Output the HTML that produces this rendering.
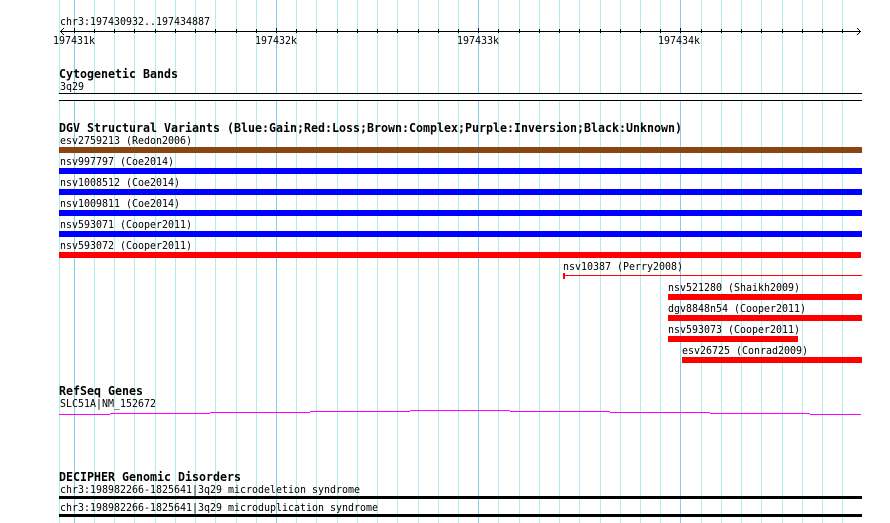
<!DOCTYPE html>
<html>
<head>
<meta charset="utf-8">
<style>
html,body{margin:0;padding:0;background:#fff;width:890px;height:523px;overflow:hidden}
svg{display:block;position:absolute;left:0;top:0}
text{font-family:"DejaVu Sans Mono","Liberation Mono",monospace;font-size:11px;fill:#000;white-space:pre}
text.b{font-weight:bold;font-size:12px}
</style>
</head>
<body>
<svg width="890" height="523" viewBox="0 0 890 523">
<g shape-rendering="crispEdges">
<g fill="#afeeee">
<rect x="59" y="0" width="1" height="523"/><rect x="94" y="0" width="1" height="523"/><rect x="114" y="0" width="1" height="523"/><rect x="134" y="0" width="1" height="523"/><rect x="155" y="0" width="1" height="523"/><rect x="175" y="0" width="1" height="523"/><rect x="195" y="0" width="1" height="523"/><rect x="215" y="0" width="1" height="523"/><rect x="236" y="0" width="1" height="523"/><rect x="256" y="0" width="1" height="523"/><rect x="296" y="0" width="1" height="523"/><rect x="316" y="0" width="1" height="523"/><rect x="337" y="0" width="1" height="523"/><rect x="357" y="0" width="1" height="523"/><rect x="377" y="0" width="1" height="523"/><rect x="397" y="0" width="1" height="523"/><rect x="418" y="0" width="1" height="523"/><rect x="438" y="0" width="1" height="523"/><rect x="458" y="0" width="1" height="523"/><rect x="498" y="0" width="1" height="523"/><rect x="519" y="0" width="1" height="523"/><rect x="539" y="0" width="1" height="523"/><rect x="559" y="0" width="1" height="523"/><rect x="579" y="0" width="1" height="523"/><rect x="600" y="0" width="1" height="523"/><rect x="620" y="0" width="1" height="523"/><rect x="640" y="0" width="1" height="523"/><rect x="660" y="0" width="1" height="523"/><rect x="701" y="0" width="1" height="523"/><rect x="721" y="0" width="1" height="523"/><rect x="741" y="0" width="1" height="523"/><rect x="761" y="0" width="1" height="523"/><rect x="782" y="0" width="1" height="523"/><rect x="802" y="0" width="1" height="523"/><rect x="822" y="0" width="1" height="523"/><rect x="842" y="0" width="1" height="523"/>
</g>
<g fill="#87ceeb">
<rect x="74" y="0" width="1" height="523"/><rect x="276" y="0" width="1" height="523"/><rect x="478" y="0" width="1" height="523"/><rect x="680" y="0" width="1" height="523"/>
</g>
<!-- axis -->
<rect x="60" y="31" width="801" height="1" fill="#000"/>
<g fill="#000">
<rect x="74" y="28" width="1" height="5"/><rect x="276" y="28" width="1" height="5"/><rect x="478" y="28" width="1" height="5"/><rect x="680" y="28" width="1" height="5"/>
<rect x="94" y="29" width="1" height="4"/><rect x="114" y="29" width="1" height="4"/><rect x="134" y="29" width="1" height="4"/><rect x="155" y="29" width="1" height="4"/><rect x="175" y="29" width="1" height="4"/><rect x="195" y="29" width="1" height="4"/><rect x="215" y="29" width="1" height="4"/><rect x="236" y="29" width="1" height="4"/><rect x="256" y="29" width="1" height="4"/><rect x="296" y="29" width="1" height="4"/><rect x="316" y="29" width="1" height="4"/><rect x="337" y="29" width="1" height="4"/><rect x="357" y="29" width="1" height="4"/><rect x="377" y="29" width="1" height="4"/><rect x="397" y="29" width="1" height="4"/><rect x="418" y="29" width="1" height="4"/><rect x="438" y="29" width="1" height="4"/><rect x="458" y="29" width="1" height="4"/><rect x="498" y="29" width="1" height="4"/><rect x="519" y="29" width="1" height="4"/><rect x="539" y="29" width="1" height="4"/><rect x="559" y="29" width="1" height="4"/><rect x="579" y="29" width="1" height="4"/><rect x="600" y="29" width="1" height="4"/><rect x="620" y="29" width="1" height="4"/><rect x="640" y="29" width="1" height="4"/><rect x="660" y="29" width="1" height="4"/><rect x="701" y="29" width="1" height="4"/><rect x="721" y="29" width="1" height="4"/><rect x="741" y="29" width="1" height="4"/><rect x="761" y="29" width="1" height="4"/><rect x="782" y="29" width="1" height="4"/><rect x="802" y="29" width="1" height="4"/><rect x="822" y="29" width="1" height="4"/><rect x="842" y="29" width="1" height="4"/>
<!-- arrowheads -->
<rect x="61" y="30" width="1" height="3"/><rect x="62" y="29" width="1" height="1"/><rect x="62" y="33" width="1" height="1"/><rect x="63" y="28" width="1" height="1"/><rect x="63" y="34" width="1" height="1"/>
<rect x="859" y="30" width="1" height="3"/><rect x="858" y="29" width="1" height="1"/><rect x="858" y="33" width="1" height="1"/><rect x="857" y="28" width="1" height="1"/><rect x="857" y="34" width="1" height="1"/>
</g>
<!-- cytoband -->
<rect x="59" y="93" width="803" height="8" fill="#fff"/>
<rect x="59" y="93" width="803" height="1" fill="#000"/>
<rect x="59" y="100" width="803" height="1" fill="#000"/>
<!-- DGV bars -->
<rect x="59" y="147" width="803" height="6" fill="#8b4513"/>
<rect x="59" y="168" width="803" height="6" fill="#0000ff"/>
<rect x="59" y="189" width="803" height="6" fill="#0000ff"/>
<rect x="59" y="210" width="803" height="6" fill="#0000ff"/>
<rect x="59" y="231" width="803" height="6" fill="#0000ff"/>
<rect x="59" y="252" width="802" height="6" fill="#ff0000"/>
<rect x="563" y="273" width="2" height="6" fill="#ff0000"/>
<rect x="565" y="275" width="297" height="1" fill="#ff0000"/>
<rect x="668" y="294" width="194" height="6" fill="#ff0000"/>
<rect x="668" y="315" width="194" height="6" fill="#ff0000"/>
<rect x="668" y="336" width="130" height="6" fill="#ff0000"/>
<rect x="682" y="357" width="180" height="6" fill="#ff0000"/>
<!-- RefSeq -->
<g fill="#ff00ff">
<rect x="59" y="414" width="51" height="1"/><rect x="110" y="413" width="100" height="1"/><rect x="210" y="412" width="100" height="1"/><rect x="310" y="411" width="100" height="1"/><rect x="410" y="410" width="100" height="1"/><rect x="510" y="411" width="100" height="1"/><rect x="610" y="412" width="100" height="1"/><rect x="710" y="413" width="100" height="1"/><rect x="810" y="414" width="51" height="1"/>
</g>
<!-- Decipher -->
<rect x="59" y="496" width="803" height="3" fill="#000"/>
<rect x="59" y="514" width="803" height="3" fill="#000"/>
</g>

<text x="60" y="25" textLength="150" lengthAdjust="spacingAndGlyphs">chr3:197430932..197434887</text>
<text x="53" y="44" textLength="42" lengthAdjust="spacingAndGlyphs">197431k</text>
<text x="255" y="44" textLength="42" lengthAdjust="spacingAndGlyphs">197432k</text>
<text x="457" y="44" textLength="42" lengthAdjust="spacingAndGlyphs">197433k</text>
<text x="658" y="44" textLength="42" lengthAdjust="spacingAndGlyphs">197434k</text>

<text class="b" x="59" y="78" textLength="119" lengthAdjust="spacingAndGlyphs">Cytogenetic Bands</text>
<text x="60" y="90" textLength="24" lengthAdjust="spacingAndGlyphs">3q29</text>

<text class="b" x="59" y="132" textLength="623" lengthAdjust="spacingAndGlyphs">DGV Structural Variants (Blue:Gain;Red:Loss;Brown:Complex;Purple:Inversion;Black:Unknown)</text>
<text x="60" y="144" textLength="132" lengthAdjust="spacingAndGlyphs">esv2759213 (Redon2006)</text>
<text x="60" y="165" textLength="114" lengthAdjust="spacingAndGlyphs">nsv997797 (Coe2014)</text>
<text x="60" y="186" textLength="120" lengthAdjust="spacingAndGlyphs">nsv1008512 (Coe2014)</text>
<text x="60" y="207" textLength="120" lengthAdjust="spacingAndGlyphs">nsv1009811 (Coe2014)</text>
<text x="60" y="228" textLength="132" lengthAdjust="spacingAndGlyphs">nsv593071 (Cooper2011)</text>
<text x="60" y="249" textLength="132" lengthAdjust="spacingAndGlyphs">nsv593072 (Cooper2011)</text>
<text x="563" y="270" textLength="120" lengthAdjust="spacingAndGlyphs">nsv10387 (Perry2008)</text>
<text x="668" y="291" textLength="132" lengthAdjust="spacingAndGlyphs">nsv521280 (Shaikh2009)</text>
<text x="668" y="312" textLength="138" lengthAdjust="spacingAndGlyphs">dgv8848n54 (Cooper2011)</text>
<text x="668" y="333" textLength="132" lengthAdjust="spacingAndGlyphs">nsv593073 (Cooper2011)</text>
<text x="682" y="354" textLength="126" lengthAdjust="spacingAndGlyphs">esv26725 (Conrad2009)</text>

<text class="b" x="59" y="395" textLength="84" lengthAdjust="spacingAndGlyphs">RefSeq Genes</text>
<text x="60" y="407" textLength="96" lengthAdjust="spacingAndGlyphs">SLC51A|NM_152672</text>

<text class="b" x="59" y="481" textLength="182" lengthAdjust="spacingAndGlyphs">DECIPHER Genomic Disorders</text>
<text x="60" y="493" textLength="300" lengthAdjust="spacingAndGlyphs">chr3:198982266-1825641|3q29 microdeletion syndrome</text>
<text x="60" y="511" textLength="318" lengthAdjust="spacingAndGlyphs">chr3:198982266-1825641|3q29 microduplication syndrome</text>
</svg>
</body>
</html>
